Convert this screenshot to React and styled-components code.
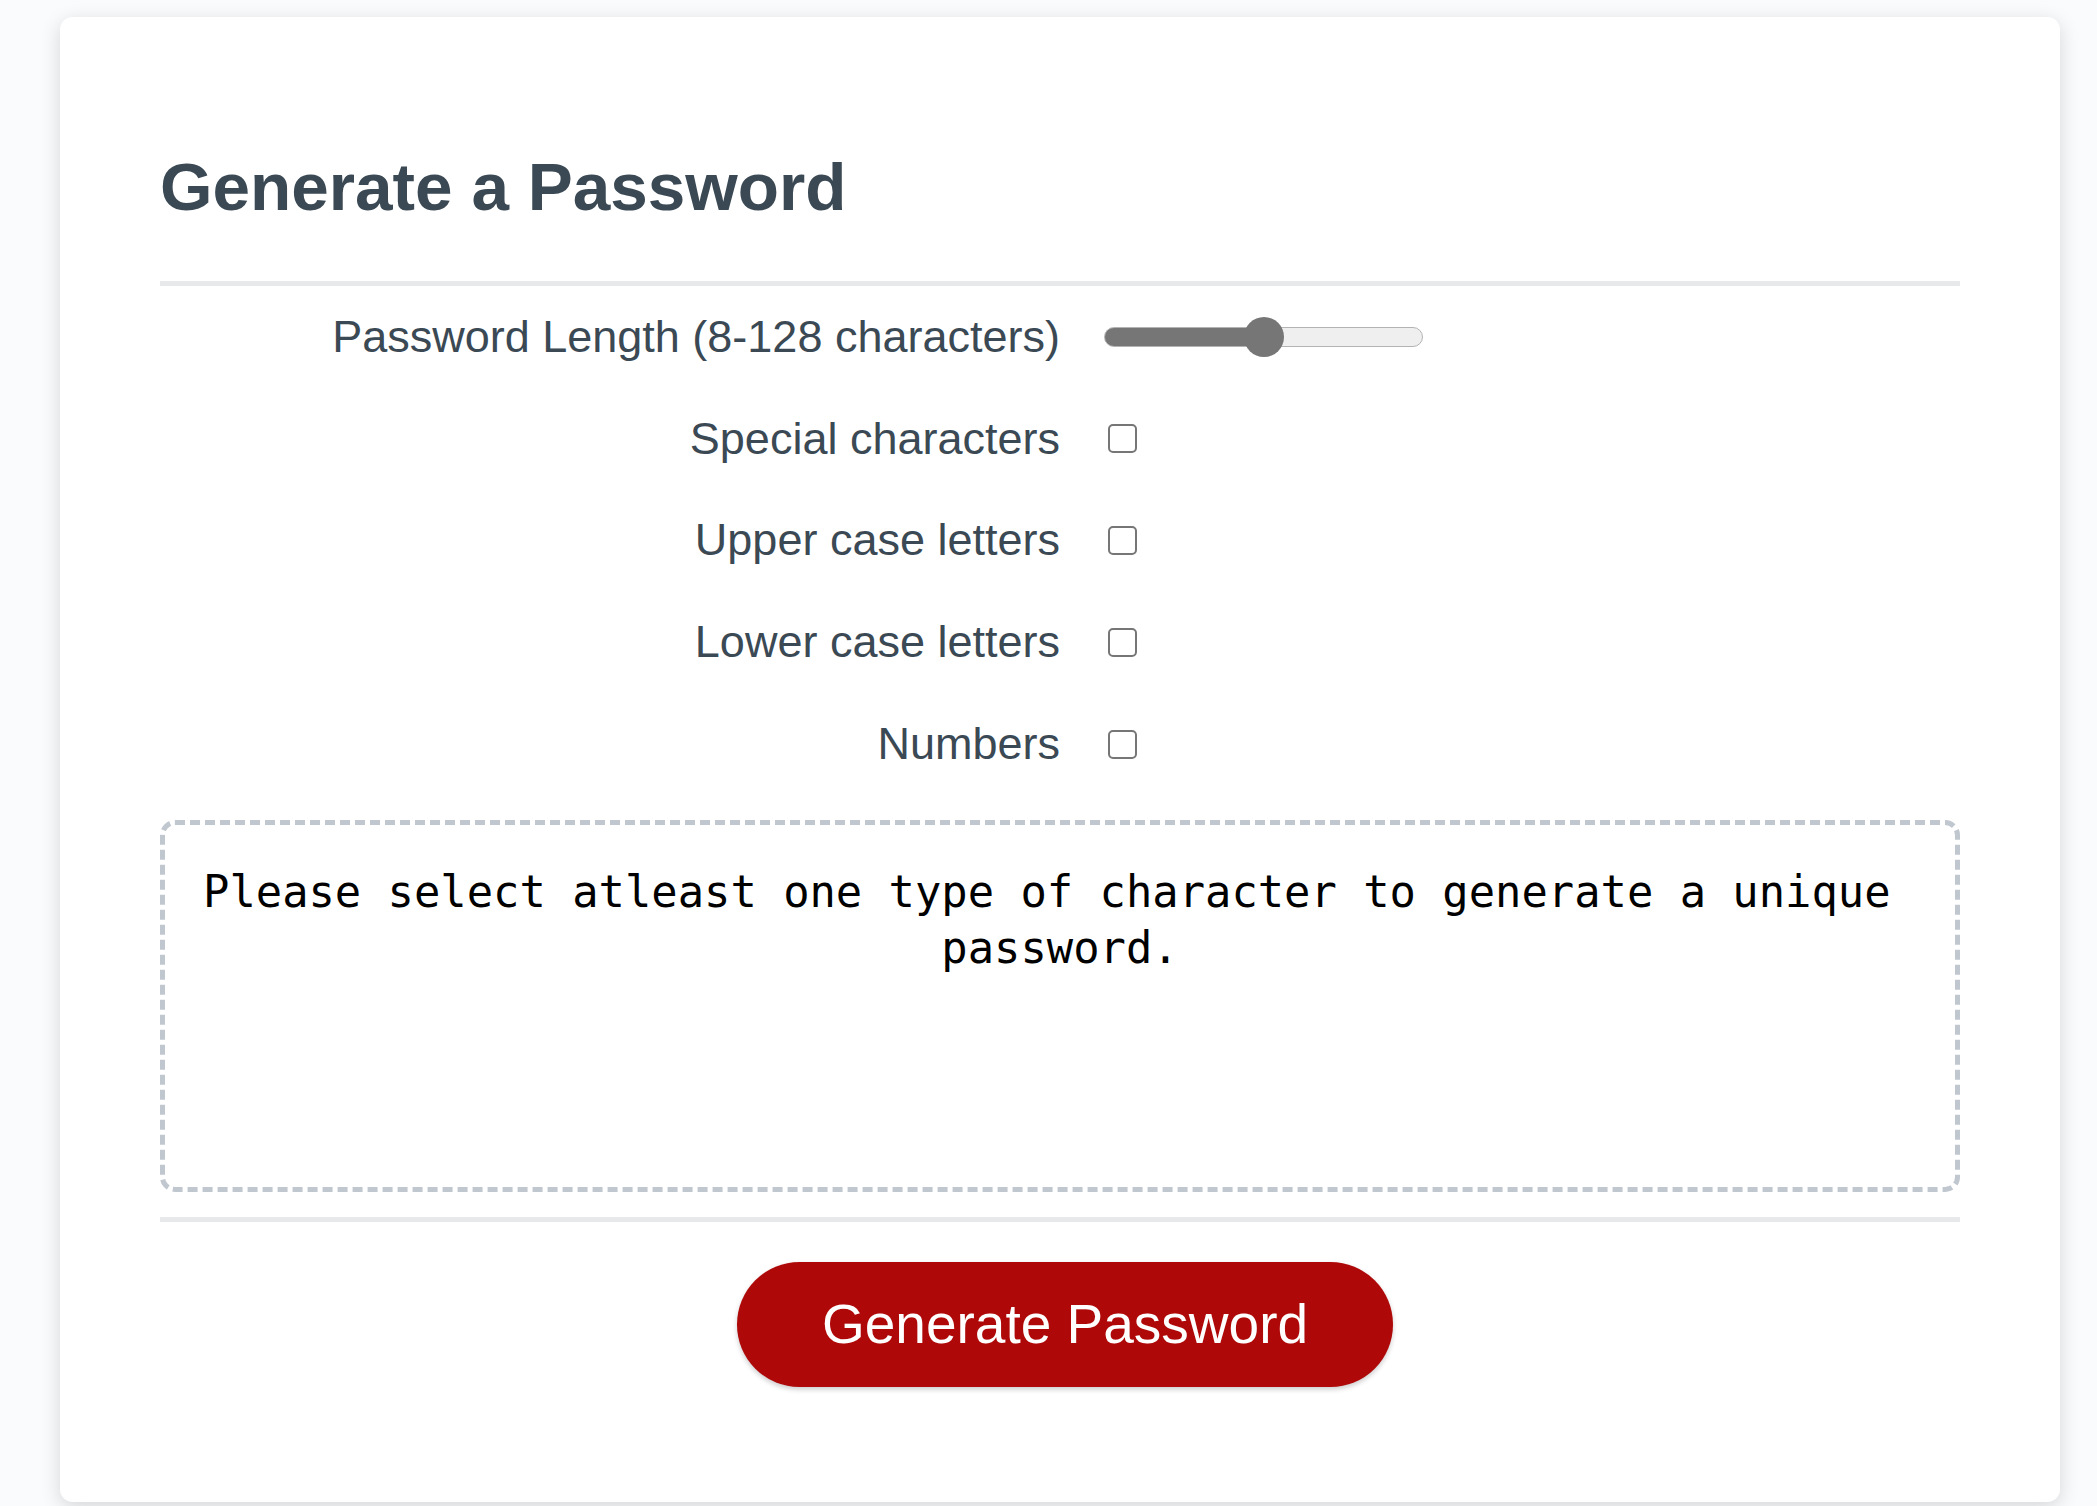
import React, { useState } from 'react';
import styled, { createGlobalStyle } from 'styled-components';

const GlobalStyle = createGlobalStyle`
	*, *::before, *::after {
		box-sizing: border-box;
	}
	html, body {
		margin: 0;
		padding: 0;
		height: 100%;
		overflow: hidden;
		background-color: #f9fbfd;
		font-family: 'Liberation Sans', Arial, sans-serif;
	}
`;

//Outer page box
const Wrapper = styled.div`
	padding: 17px 37px 0 60px;
`;

const Card = styled.div`
	width: 2000px;
	background-color: #ffffff;
	border-radius: 12.5px;
	box-shadow: rgba(0, 0, 0, 0.15) 0px 5px 20px 0px;
	color: hsl(206, 17%, 28%);
	font-size: 45px;
	padding: 75px 100px;
`;

const CardHeader = styled.div`
	&::after {
		content: ' ';
		display: block;
		width: 100%;
		height: 5px;
		background: #e7e9eb;
	}
`;

const Title = styled.h2`
	margin: 56px 0;
	font-size: 67.5px;
	font-weight: bold;
	line-height: normal;
`;

const OptionRow = styled.div`
	display: flex;
	align-items: center;
	height: 101.8px;
`;

const OptionLabel = styled.label`
	width: 50%;
	text-align: right;
	white-space: nowrap;
`;

const Control = styled.div`
	display: flex;
	align-items: center;
	padding-left: 44px;
`;

const LengthSlider = styled.input`
	-webkit-appearance: none;
	appearance: none;
	width: 319px;
	height: 40px;
	margin: 0;
	background: transparent;
	&::-webkit-slider-runnable-track {
		height: 20px;
		border-radius: 10px;
		border: 1px solid #b3b3b3;
		background: linear-gradient(
			to right,
			#767676 0,
			#767676 ${(p) => p.$fill}%,
			#efefef ${(p) => p.$fill}%,
			#efefef 100%
		);
	}
	&::-webkit-slider-thumb {
		-webkit-appearance: none;
		appearance: none;
		width: 40px;
		height: 40px;
		margin-top: -11px;
		border-radius: 50%;
		background: #767676;
		border: none;
	}
`;

const CheckBox = styled.input`
	-webkit-appearance: none;
	appearance: none;
	width: 29px;
	height: 29px;
	margin: 0 0 0 4px;
	border: 2.5px solid #767676;
	border-radius: 5px;
	background: #ffffff;
	&:checked {
		background: #0075ff;
		border-color: #0075ff;
	}
`;

const PasswordBox = styled.textarea`
	display: block;
	width: 100%;
	height: 372px;
	margin: 25px 0;
	padding: 39px 15px 0 15px;
	border: 5px dashed #c0c7cf;
	border-radius: 15px;
	font-family: 'DejaVu Sans Mono', 'Liberation Mono', monospace;
	font-size: 43.8px;
	line-height: 56px;
	color: #000000;
	text-align: center;
	white-space: break-spaces;
	resize: none;
	overflow: hidden;
	outline: none;
`;

const CardFooter = styled.div`
	display: flex;
	flex-direction: column;
	align-items: center;
	&::before {
		content: ' ';
		display: block;
		width: 100%;
		height: 5px;
		background: #e7e9eb;
	}
`;

const GenerateButton = styled.button`
	border: none;
	background-color: hsl(360, 91%, 36%);
	border-radius: 62.5px;
	box-shadow: 0px 2.5px 5px rgba(0, 0, 0, 0.2);
	color: #ffffff;
	font-family: 'Liberation Sans', Arial, sans-serif;
	font-size: 55px;
	line-height: 55px;
	margin: 40px 40px 40px 50px;
	padding: 35px 85px;
	cursor: pointer;
`;

const options = ['Special characters', 'Upper case letters', 'Lower case letters', 'Numbers'];

export default function App() {
	const [length, setLength] = useState(68);
	const [checked, setChecked] = useState({});
	const fill = ((length - 8) / 120) * 100;

	return (
		<>
			<GlobalStyle />
			<Wrapper>
				<Card>
					<CardHeader>
						<Title>Generate a Password</Title>
					</CardHeader>
					<OptionRow>
						<OptionLabel htmlFor="length">Password Length (8-128 characters)</OptionLabel>
						<Control>
							<LengthSlider
								id="length"
								type="range"
								min="8"
								max="128"
								value={length}
								$fill={fill}
								onChange={(e) => setLength(Number(e.target.value))}
							/>
						</Control>
					</OptionRow>
					{options.map((name) => (
						<OptionRow key={name}>
							<OptionLabel htmlFor={name}>{name}</OptionLabel>
							<Control>
								<CheckBox
									id={name}
									type="checkbox"
									checked={!!checked[name]}
									onChange={() => setChecked({ ...checked, [name]: !checked[name] })}
								/>
							</Control>
						</OptionRow>
					))}
					<PasswordBox
						readOnly
						value="Please select atleast one type of character to generate a unique password."
					/>
					<CardFooter>
						<GenerateButton>Generate Password</GenerateButton>
					</CardFooter>
				</Card>
			</Wrapper>
		</>
	);
}
